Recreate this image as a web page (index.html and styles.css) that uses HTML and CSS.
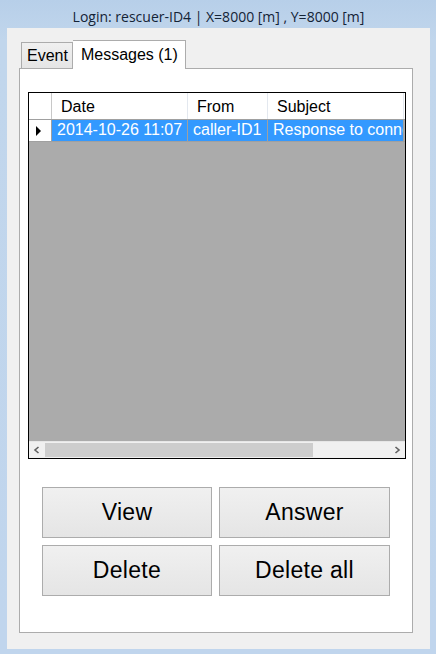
FILE: index.html
```html
<!DOCTYPE html>
<html lang="en">

<head>
    <meta charset="UTF-8">
    <title>Messages</title>
    <link rel="stylesheet" href="styles.css">
</head>

<body>
    <div class="window">
        <div class="titlebar">Login: rescuer-ID4 | X=8000 [m] , Y=8000 [m]</div>
        <div class="client">
            <div class="tabs">
                <div class="tab">Event</div>
                <div class="tab active">Messages (1)</div>
            </div>
            <div class="panel">
                <!-- 消息列表 -->
                <div class="grid">
                    <div class="grid-row header">
                        <div class="cell rowhead"></div>
                        <div class="cell col-date">Date</div>
                        <div class="cell col-from">From</div>
                        <div class="cell col-subject">Subject</div>
                    </div>
                    <div class="grid-row selected">
                        <div class="cell rowhead"><span class="arrow"></span></div>
                        <div class="cell col-date">2014-10-26 11:07</div>
                        <div class="cell col-from">caller-ID1</div>
                        <div class="cell col-subject">Response to conne</div>
                    </div>
                    <div class="grid-empty"></div>
                    <div class="hscroll">
                        <div class="scroll-btn">
                            <svg width="8" height="8" viewBox="0 0 8 8"><path d="M5.5 1 L2 4 L5.5 7" fill="none" stroke="#606060" stroke-width="1.6"/></svg>
                        </div>
                        <div class="track"><div class="thumb"></div></div>
                        <div class="scroll-btn">
                            <svg width="8" height="8" viewBox="0 0 8 8"><path d="M2.5 1 L6 4 L2.5 7" fill="none" stroke="#606060" stroke-width="1.6"/></svg>
                        </div>
                    </div>
                </div>
                <div class="buttons">
                    <button class="btn">View</button>
                    <button class="btn">Answer</button>
                    <button class="btn">Delete</button>
                    <button class="btn">Delete all</button>
                </div>
            </div>
        </div>
    </div>
</body>

</html>
```

FILE: styles.css
```css
body {
    margin: 0;
}

/* 窗口外框 */
.window {
    width: 436px;
    height: 654px;
    box-sizing: border-box;
    padding: 0 6px 5px 7px;
    background: linear-gradient(to bottom, #b7cfe9 0px, #c1d6ec 40px, #c0d5ed 100%);
    display: flex;
    flex-direction: column;
}

.titlebar {
    height: 28px;
    line-height: 34px;
    text-align: center;
    font-family: "Open Sans", "Liberation Sans", sans-serif;
    font-size: 14px;
    color: #142336;
}

.client {
    flex: 1;
    background: #f0f0f0;
    padding: 12px 0 0 12px;
}

/* 标签页 */
.tabs {
    display: flex;
    align-items: flex-end;
    height: 28px;
    padding-left: 2px;
    font-family: "Liberation Sans", Arial, sans-serif;
    font-size: 16px;
}

.tab {
    height: 26px;
    box-sizing: border-box;
    padding: 4px 4px 0 5px;
    border: 1px solid #acacac;
    border-bottom: none;
    background: linear-gradient(to bottom, #f0f0f0, #e5e5e5);
    color: #000;
}

.tab.active {
    height: 29px;
    margin-bottom: -1px;
    padding: 5px 7px 0 8px;
    background: #fff;
    position: relative;
    z-index: 1;
    border-left: none;
}

.panel {
    width: 394px;
    height: 565px;
    box-sizing: border-box;
    border: 1px solid #acacac;
    background: #fff;
    padding: 23px 0 0 8px;
}

/* 数据表格 */
.grid {
    width: 378px;
    height: 367px;
    box-sizing: border-box;
    border: 1px solid #000;
    background: #ababab;
    display: flex;
    flex-direction: column;
    overflow: hidden;
    font-family: "Liberation Sans", Arial, sans-serif;
    font-size: 16px;
}

.grid-row {
    display: flex;
    flex: none;
}

.grid-row.header {
    height: 27px;
    background: #fff;
    border-bottom: 1px solid #a0a0a0;
    box-sizing: border-box;
}

.grid-row.selected {
    height: 22px;
    border-bottom: 1px solid #a0a0a0;
    box-sizing: border-box;
}

.cell {
    box-sizing: border-box;
    padding-left: 5px;
    white-space: nowrap;
    overflow: hidden;
    flex: none;
}

.header .cell {
    line-height: 27px;
    padding-left: 9px;
    border-right: 1px solid #e3e8ef;
}

.selected .cell {
    line-height: 20px;
    background: #3399ff;
    color: #fff;
    border-right: 1px solid #a0a0a0;
}

.cell.rowhead {
    width: 23px;
    padding: 0;
    border-right: 1px solid #a0a0a0 !important;
}

.header .rowhead {
    border-right: 1px solid #c8c8c8 !important;
}

.selected .rowhead {
    background: #fff;
    display: flex;
    align-items: center;
    padding-left: 7px;
}

.arrow {
    width: 0;
    height: 0;
    border-top: 5px solid transparent;
    border-bottom: 5px solid transparent;
    border-left: 5px solid #000;
}

.col-date {
    width: 136px;
}

.col-from {
    width: 80px;
}

.col-subject {
    width: 136px;
}

.grid-empty {
    flex: 1;
}

.hscroll {
    height: 17px;
    display: flex;
    background: #f0f0f0;
    border-top: 1px solid #e6e6e6;
    box-sizing: border-box;
}

.scroll-btn {
    width: 16px;
    display: flex;
    align-items: center;
    justify-content: center;
}

.track {
    flex: 1;
    padding: 1px 0;
    display: flex;
}

.thumb {
    width: 268px;
    background: #cdcdcd;
}

/* 按钮 */
.buttons {
    display: grid;
    grid-template-columns: 170px 171px;
    grid-auto-rows: 51px;
    gap: 7px;
    margin: 28px 0 0 14px;
}

.btn {
    margin: 0;
    border: 1px solid #acacac;
    background: linear-gradient(to bottom, #f0f0f0, #e5e5e5);
    font-family: "Liberation Sans", Arial, sans-serif;
    font-size: 23px;
    letter-spacing: 0.3px;
    color: #000;
    padding: 0;
}
```
